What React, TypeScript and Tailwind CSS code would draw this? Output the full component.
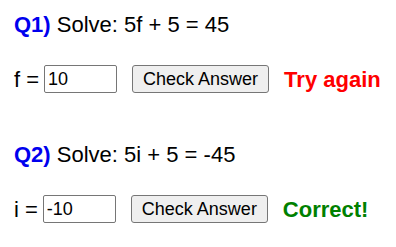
import React from 'react';

const questions = [
  { id: 1, label: 'Q1)', prompt: 'Solve: 5f + 5 = 45', variable: 'f', value: '10', result: 'Try again', ok: false },
  { id: 2, label: 'Q2)', prompt: 'Solve: 5i + 5 = -45', variable: 'i', value: '-10', result: 'Correct!', ok: true },
];

export default function App() {
  return (
    <div className="min-h-screen bg-white pl-[14px] pt-[12px] text-black" style={{ fontFamily: '"Liberation Sans", Arial, sans-serif' }}>
      {questions.map((q) => (
        <div key={q.id} className="mb-[49px]">
          <div className="h-[25px] text-[22px] leading-[25px]">
            <span className="font-bold text-[#0000ee]">{q.label}</span> {q.prompt}
          </div>
          <div className="mt-[28px] flex h-[28px] items-center">
            <span className="text-[22px] leading-[25px]">{q.variable} =</span>
            <input
              readOnly
              value={q.value}
              className="ml-[5px] h-[28px] w-[73px] rounded-[2px] border border-[#767676] px-[3px] text-[18px] outline-none"
            />
            <button className="ml-[15px] h-[28px] w-[137px] rounded-[3px] border border-[#767676] bg-[#efefef] text-[18px]">
              Check Answer
            </button>
            <span className={`ml-[15px] text-[22px] font-bold leading-[25px] ${q.ok ? 'text-[#008000]' : 'text-[#ff0000]'}`}>{q.result}</span>
          </div>
        </div>
      ))}
    </div>
  );
}
